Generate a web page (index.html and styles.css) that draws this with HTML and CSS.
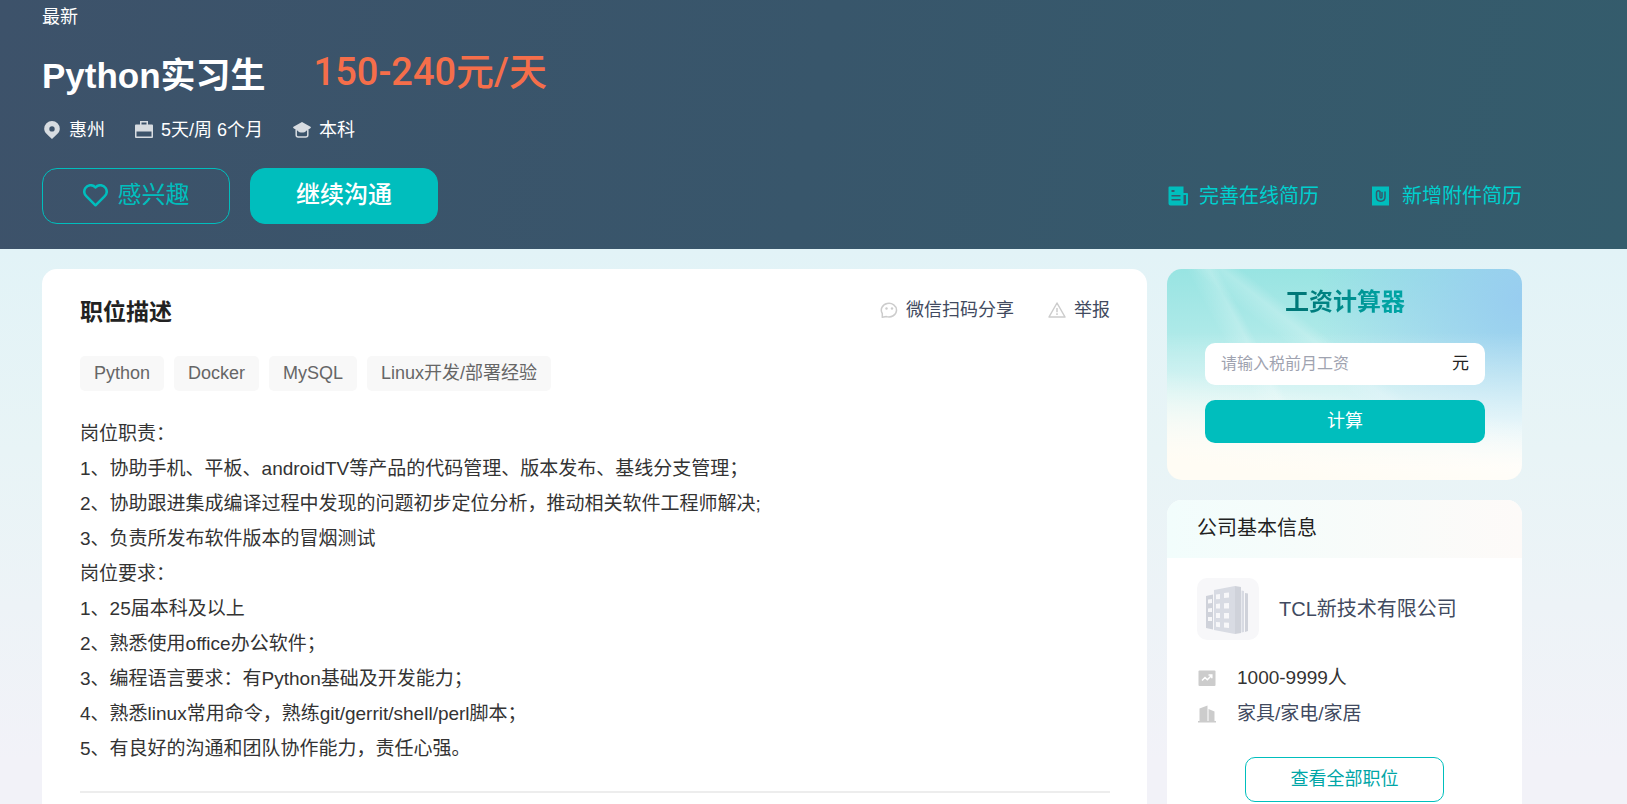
FILE: index.html
```html
<!DOCTYPE html>
<html lang="zh-CN">
<head>
<meta charset="utf-8">
<meta name="viewport" content="width=device-width, initial-scale=1">
<title>Python实习生</title>
<link rel="stylesheet" href="styles.css">
</head>
<body>
<header class="hero">
  <div class="hero-status">最新</div>
  <div class="hero-title">
    <h1 class="job-name">Python实习生</h1>
    <span class="salary">150-240元/天</span>
  </div>
  <ul class="meta">
    <li class="meta-item">
      <svg viewBox="0 0 20 18" width="20" height="18" aria-hidden="true"><path fill="#d7dce1" fill-rule="evenodd" d="M10 0a7.800 7.800 0 0 0-7.800 7.800C2.200 12 6.500 14.500 10 18c3.500-3.500 7.800-6 7.800-10.200A7.800 7.800 0 0 0 10 0zm0 5.200a2.700 2.700 0 1 1 0 5.400 2.700 2.700 0 0 1 0-5.400z"/></svg>
      惠州
    </li>
    <li class="meta-item">
      <svg viewBox="0 0 20 18" width="20" height="18" aria-hidden="true"><path fill="#d7dce1" fill-rule="evenodd" d="M6 0h8v3.500h4a1 1 0 0 1 1 1V16a1 1 0 0 1-1 1H2a1 1 0 0 1-1-1V4.500a1 1 0 0 1 1-1h4zm1.500 1.500v2h5v-2zM2.500 10.500v5h15v-5z"/></svg>
      5天/周 6个月
    </li>
    <li class="meta-item">
      <svg viewBox="0 0 20 18" width="20" height="18" aria-hidden="true"><path fill="#d7dce1" d="M10 1l8.500 4.800c.8.500.5 1.200-.5 1.800l-4 2.400c-1 2-7 2-8 0L2 7.600c-1-.6-1.300-1.300-.5-1.800z"/><path fill="none" stroke="#d7dce1" stroke-width="1.500" d="M4.200 8.500v5.500a2 2 0 0 0 2 2h7.600a2 2 0 0 0 2-2V8.500"/></svg>
      本科
    </li>
  </ul>
  <div class="hero-actions">
    <button class="btn-hero btn-like" type="button">
      <svg viewBox="0 0 25 23" width="25" height="23" aria-hidden="true"><path fill="none" stroke="#00bebd" stroke-width="2.500" stroke-linejoin="round" d="M12.500 3.500C9.500 0 4.500.6 2.300 4.200.4 7.400 1.500 10.400 3.500 12.400l9 8.900 9-8.900c2-2 3.100-5 1.200-8.200C20.500.6 15.500 0 12.500 3.500z"/></svg>
      感兴趣
    </button>
    <button class="btn-hero btn-chat" type="button">继续沟通</button>
    <nav class="resume-links">
      <a class="resume-link" href="#">
        <svg viewBox="0 0 20 20" width="20" height="20" aria-hidden="true"><path fill="#00bebd" fill-rule="evenodd" d="M1.500.5h14V7H19a1 1 0 0 1 1 1v9.500a2 2 0 0 1-2 2H2.500a2 2 0 0 1-2-2v-16a1 1 0 0 1 1-1zM3.500 4v2h3V4zm0 5v1.400h9V9zm0 4v1.400h9V13zm12-4v9h2.500V9z"/></svg>
        完善在线简历
      </a>
      <a class="resume-link" href="#">
        <svg viewBox="0 0 20 20" width="20" height="20" aria-hidden="true"><path fill="#00bebd" d="M1 .5h17v19H1z"/><path fill="none" stroke="#35596c" stroke-width="1.500" stroke-linecap="round" d="M8.800 5.300C6.500 4 5.500 5.500 5.500 7v4c0 5.500 8.500 5.500 8.500 0V6M9 5.500v5.300c0 1.600 2 1.600 2 0V6.500"/></svg>
        新增附件简历
      </a>
    </nav>
  </div>
</header>

<main class="content">
  <section class="card job">
    <div class="job-head">
      <h2 class="job-heading">职位描述</h2>
      <a class="job-tool" href="#">
        <svg viewBox="0 0 18 18" width="18" height="18" aria-hidden="true"><path fill="none" stroke="#ccc" stroke-width="1.500" stroke-linejoin="round" d="M2.300 16.300V12.500A7.600 6.800 0 1 1 6.500 15.600z"/><circle cx="6.500" cy="7.500" r="1.200" fill="#ccc"/><circle cx="12" cy="7.500" r="1.200" fill="#ccc"/></svg>
        微信扫码分享
      </a>
      <a class="job-tool" href="#">
        <svg viewBox="0 0 18 18" width="18" height="18" aria-hidden="true"><path fill="none" stroke="#ccc" stroke-width="1.500" stroke-linejoin="round" d="M9 2l8 14H1zM9 7v4.200M9 12.300v1.700"/></svg>
        举报
      </a>
    </div>
    <ul class="tags">
      <li class="tag">Python</li>
      <li class="tag">Docker</li>
      <li class="tag">MySQL</li>
      <li class="tag">Linux开发/部署经验</li>
    </ul>
    <div class="desc">
      <p>岗位职责：</p>
      <p>1、协助手机、平板、androidTV等产品的代码管理、版本发布、基线分支管理；</p>
      <p>2、协助跟进集成编译过程中发现的问题初步定位分析，推动相关软件工程师解决;</p>
      <p>3、负责所发布软件版本的冒烟测试</p>
      <p>岗位要求：</p>
      <p>1、25届本科及以上</p>
      <p>2、熟悉使用office办公软件；</p>
      <p>3、编程语言要求：有Python基础及开发能力；</p>
      <p>4、熟悉linux常用命令，熟练git/gerrit/shell/perl脚本；</p>
      <p>5、有良好的沟通和团队协作能力，责任心强。</p>
    </div>
  </section>

  <aside class="side">
    <form class="card calc">
      <h2 class="calc-title"><label for="wage">工资计算器</label></h2>
      <div class="calc-field">
        <input class="calc-input" id="wage" type="text" placeholder="请输入税前月工资">
        <span class="calc-unit">元</span>
      </div>
      <button class="calc-btn" type="button">计算</button>
    </form>

    <section class="card company">
      <h2 class="company-title">公司基本信息</h2>
      <div class="company-body">
        <a class="company-link" href="#">
          <span class="company-logo">
            <svg viewBox="0 0 62 62" width="62" height="62" aria-hidden="true">
              <path fill="#cfd2da" d="M9 18l7-1.500V51.500L9 50z"/>
              <path fill="#d8dbe3" d="M17 12l21-4v48l-21-4z"/>
              <path fill="#cfd2da" d="M38 8l6 1v46l-6 1z"/>
              <path fill="#d8dbe3" d="M44.500 12.500l2.500.5v41l-2.500.5z"/>
              <path fill="#cfd2da" d="M48 15l3 .5V53l-3 1z"/>
              <path fill="#f7f7f9" d="M11 21.500l4-.5v4l-4 .5zM11 30.500l4-.5v4h-4zM11 39h4v4h-4zM19 16.500l4-.5v5l-4 .3zM27 15l5-.6v5.200l-5 .4zM19 26l4-.5v5h-4zM27 25.300l5-.3v5.500h-5zM19 35h4v5h-4zM27 35h5v5.500h-5zM19 44l4 .2v5l-4-.5zM27 44.500l5 .3v5.200l-5-.5z"/>
            </svg>
          </span>
          TCL新技术有限公司
        </a>
        <ul class="facts">
          <li class="fact">
            <svg viewBox="0 0 20 18" width="20" height="18" aria-hidden="true"><rect x="1.500" y="1.500" width="17" height="15.500" rx="1" fill="#ccc"/><path fill="none" stroke="#fff" stroke-width="1.500" d="M5 11.500l3-3 2.300 2.200L14.500 6.500M11.500 6h3.300v3.300"/></svg>
            <span>1000-9999人</span>
          </li>
          <li class="fact fact-muted">
            <svg viewBox="0 0 20 18" width="20" height="18" aria-hidden="true"><path fill="#ccc" d="M1 16h1.500V3.500L10.500.5V16h1V4l6 2.500V16H19v1.500H1z"/></svg>
            <span>家具/家电/家居</span>
          </li>
        </ul>
        <a class="btn-all" href="#">查看全部职位</a>
      </div>
    </section>
  </aside>
</main>
</body>
</html>
```

FILE: styles.css
```css
* {
  box-sizing: border-box;
}

body {
  margin: 0;
  min-height: 100vh;
  font-family: "Liberation Sans", "Noto Sans CJK SC", sans-serif;
  font-size: 18px;
  line-height: 26px;
  color: #333;
  background: linear-gradient(#e2f3f7 250px, #e8f4f6 450px, #f2f2f8 760px) no-repeat #f2f2f8;
}

h1, h2, p, ul {
  margin: 0;
  padding: 0;
}

ul {
  list-style: none;
}

a {
  color: inherit;
  text-decoration: none;
}

button, input {
  font-family: inherit;
}

svg {
  display: block;
  flex: none;
}

/* Header */
.hero {
  padding: 4px 105px 25px 42px;
  color: #fff;
  background: linear-gradient(100deg, #3d526a, #38566b 50%, #345c6c);
}

.hero-title {
  display: flex;
  gap: 48px;
  margin-top: 20px;
}

.job-name {
  padding-top: 2px;
  font-size: 35px;
  line-height: 48px;
}

.salary {
  font-family: Roboto, "Noto Sans CJK SC", sans-serif;
  font-size: 38px;
  font-weight: 500;
  line-height: 44px;
  color: #f56e4a;
}

.meta {
  display: flex;
  gap: 29px;
  margin-top: 17px;
}

.meta-item {
  display: flex;
  align-items: center;
  gap: 7px;
}

.hero-actions {
  display: flex;
  align-items: center;
  gap: 20px;
  margin-top: 25px;
}

.btn-hero {
  display: flex;
  align-items: center;
  justify-content: center;
  gap: 10px;
  width: 188px;
  height: 56px;
  padding: 0 0 2px;
  border: 1px solid #00bebd;
  border-radius: 15px;
  font-size: 24px;
  line-height: 36px;
}

.btn-like {
  color: #00bebd;
  background: none;
}

.btn-chat {
  font-weight: 500;
  color: #fff;
  background: #00bebd;
}

.resume-links {
  display: flex;
  gap: 52px;
  margin-left: auto;
}

.resume-link {
  display: flex;
  align-items: center;
  gap: 11px;
  font-size: 20px;
  color: #00cfce;
}

/* Page columns */
.content {
  display: grid;
  grid-template-columns: minmax(0, 1fr) 355px;
  gap: 20px;
  padding: 20px 105px 0 42px;
}

.card {
  border-radius: 15px;
  background: #fff;
}

/* Job description */
.job {
  padding: 28px 37px 0 38px;
  border-radius: 15px 15px 0 0;
}

.job-head {
  display: flex;
  align-items: flex-start;
  gap: 34px;
}

.job-heading {
  flex: 1;
  font-size: 23px;
  line-height: 30px;
  color: #222;
}

.job-tool {
  display: flex;
  align-items: center;
  gap: 8px;
  color: #414a60;
}

.tags {
  display: flex;
  flex-wrap: wrap;
  gap: 10px;
  margin-top: 29px;
}

.tag {
  padding: 4px 14px 5px;
  border-radius: 5px;
  color: #666;
  background: #f8f8f8;
}

.desc {
  margin-top: 25px;
  padding-bottom: 25px;
  border-bottom: 2px solid #ededed;
  font-size: 19px;
  line-height: 35px;
}

/* Salary calculator */
.side {
  display: flex;
  flex-direction: column;
  gap: 20px;
}

.calc {
  padding: 17px 37px 37px 38px;
  background:
    linear-gradient(8deg, #fffcf4 8%, rgba(255, 252, 244, 0) 42%),
    linear-gradient(0deg, #fff 6%, rgba(255, 255, 255, 0) 70%),
    radial-gradient(circle at 100% 14%, #98cdf0, rgba(152, 205, 240, 0) 52%),
    linear-gradient(38deg, rgba(255, 255, 255, 0) 47%, rgba(255, 255, 255, .2) 52%, rgba(255, 255, 255, 0) 55%),
    linear-gradient(62deg, rgba(255, 255, 255, 0) 28%, rgba(255, 255, 255, .2) 33%, rgba(255, 255, 255, 0) 35%),
    linear-gradient(#98e4e2, #b4ebea 40%, #c8eff0);
}

.calc-title {
  font-size: 24px;
  line-height: 32px;
  text-align: center;
  color: transparent;
  background: linear-gradient(90deg, #007878 35%, #00a3a3 65%);
  background-clip: text;
}

.calc-field {
  display: flex;
  align-items: center;
  height: 42px;
  margin-top: 25px;
  padding: 0 16px;
  border-radius: 10px;
  background: #fff;
}

.calc-input {
  flex: 1;
  min-width: 0;
  height: 30px;
  padding: 0;
  border: 0;
  outline: 0;
  font-size: 16px;
  color: #333;
  background: none;
}

.calc-input::placeholder {
  color: #9fa3b0;
}

.calc-unit {
  font-size: 17px;
  color: #222;
}

.calc-btn {
  display: block;
  width: 100%;
  height: 43px;
  margin-top: 15px;
  padding: 0 0 2px;
  border: 0;
  border-radius: 10px;
  font-size: 18px;
  line-height: 26px;
  color: #fff;
  background: #00bebd;
}

/* Company */
.company {
  overflow: hidden;
  border-radius: 15px 15px 0 0;
}

.company-title {
  padding: 13px 30px 15px;
  font-size: 20px;
  font-weight: 400;
  line-height: 30px;
  color: #222;
  background: linear-gradient(90deg, #f2fdfc, #fdfaf8);
}

.company-body {
  padding: 20px 30px 2px;
}

.company-link {
  display: flex;
  align-items: center;
  gap: 20px;
  font-size: 20px;
  color: #414a60;
}

.company-logo {
  border-radius: 10px;
  background: #f7f7f9;
}

.facts {
  margin-top: 20px;
  font-size: 19px;
  line-height: 36px;
}

.fact {
  display: flex;
  align-items: center;
  gap: 20px;
}

.fact-muted {
  color: #414a60;
}

.btn-all {
  display: block;
  width: 199px;
  margin: 25px auto 0;
  padding: 8px 0 9px;
  border: 1px solid #00bebd;
  border-radius: 10px;
  text-align: center;
  color: #00a6a7;
}
```
